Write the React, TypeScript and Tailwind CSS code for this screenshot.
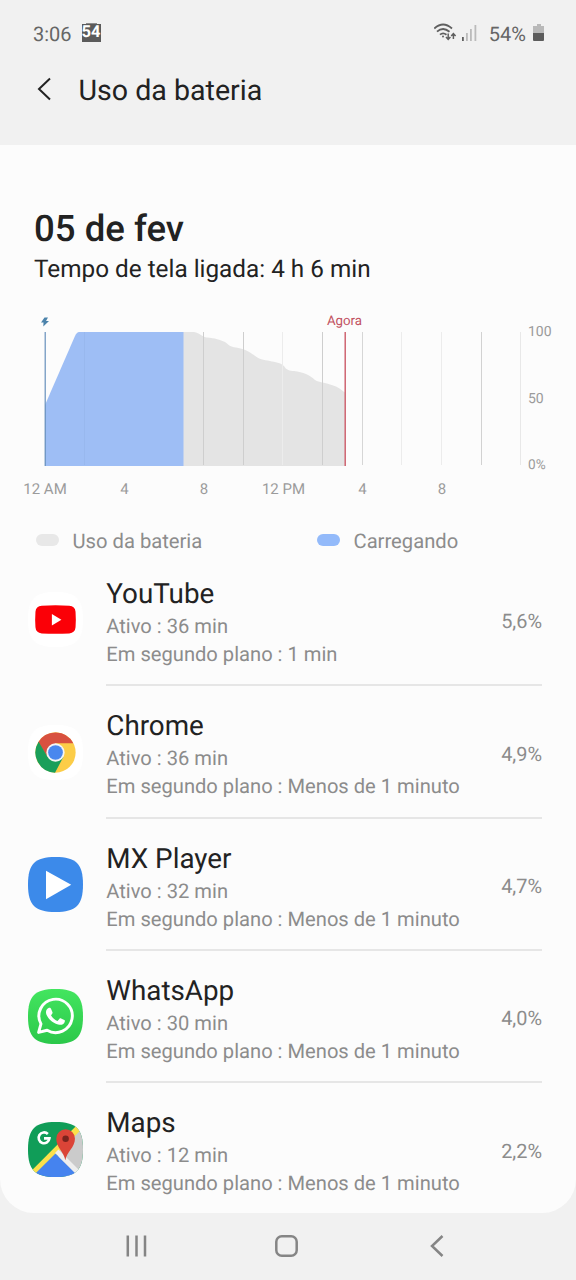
import React from "react";

const GRID = [
  [84.5, "#eeeeee"],
  [203.5, "#cecece"],
  [243.5, "#cecece"],
  [282.5, "#ececec"],
  [322.5, "#cecece"],
  [362.5, "#d6d6d6"],
  [401.5, "#ececec"],
  [441.5, "#ececec"],
  [481.5, "#d2d2d2"],
  [520.5, "#e8e8e8"],
] as const;

const HOURS = [
  [45, "12 AM"],
  [124.5, "4"],
  [204, "8"],
  [283.5, "12 PM"],
  [362.5, "4"],
  [442, "8"],
] as const;

function Chart() {
  return (
    <svg viewBox="0 305 576 200" className="block h-[200px] w-full shrink-0 font-['Roboto',sans-serif]">
      <path d="M183 332H194C200 333 202 337 207 337.500C215 338 220 340 225 342C229 345 230 347 236 347.500C246 349 249 352 254 355C258 359 264 360 270 361C275 362 281 363 284 366C286 370 290 371 294 371C303 372 310 375 315 380C320 383 324 382 330 384.500C337 386 340 389 345 392.500V466H183Z" fill="#e4e4e4" />
      <path d="M45 405L75 336Q77 332 79 332H183.500V466H45Z" fill="#9ebef5" />
      {GRID.map(([x, color]) => (
        <line key={x} x1={x} x2={x} y1="332" y2="465" stroke={x < 100 ? "#98b8ee" : color} strokeWidth="1" />
      ))}
      <rect x="44.600" y="332" width="1.200" height="134" fill="#668fbb" />
      <rect x="344.500" y="332" width="1.400" height="134" fill="#cb5a68" />
      <path d="M44.500 317.500L41 322.500H43.500L43.300 326.500L49 321H46L48 317.500Z" fill="#4c83ab" />
      <text x="344.500" y="325" textAnchor="middle" fontSize="13.300" fill="#c25362">Agora</text>
      <g fill="#9b9b9b" fontSize="14">
        <text x="528" y="336">100</text>
        <text x="528" y="403">50</text>
        <text x="528" y="469.300" fontSize="13.600">0%</text>
      </g>
      <g fill="#9b9b9b" fontSize="15" textAnchor="middle">
        {HOURS.map(([x, label]) => (
          <text key={x} x={x} y="494">{label}</text>
        ))}
      </g>
    </svg>
  );
}

const SQUIRCLE = "M28 0C49 0 56 7 56 28S49 56 28 56S0 49 0 28S7 0 28 0Z";

function YouTubeIcon() {
  return (
    <svg viewBox="0 0 56 56" className="size-[55px]">
      <path d={SQUIRCLE} fill="#fff" />
      <path d="M14 14Q28 13.200 42 14Q48 14.400 48.400 20Q49 28 48.400 36Q48 41.800 42 42.200Q28 43 14 42.200Q8 41.800 7.600 36Q7 28 7.600 20Q8 14.400 14 14Z" fill="#fb0007" />
      <path d="M24.300 22.400V34L34 28.200Z" fill="#fff" />
    </svg>
  );
}

function ChromeIcon() {
  return (
    <svg viewBox="0 0 56 56" className="size-[55px]">
      <path d={SQUIRCLE} fill="#fff" />
      <circle cx="28" cy="28" r="20.500" fill="#fccd48" />
      <path d="M10.250 17.750A20.500 20.500 0 0 1 46.200 18.700H28L20 32.600Z" fill="#d85140" />
      <path d="M10.800 17A20.500 20.500 0 0 0 27.500 48.500L36 32.600L28 28L20 32.600Z" fill="#1a9f5a" />
      <circle cx="28" cy="28" r="9.300" fill="#f5f5f5" />
      <circle cx="28" cy="28" r="7.500" fill="#4a87ee" />
    </svg>
  );
}

function PlayerIcon() {
  return (
    <svg viewBox="0 0 56 56" className="size-[55px]">
      <path d={SQUIRCLE} fill="#3c8aea" />
      <path d="M18.300 14V43L44 28.300Z" fill="#fff" />
    </svg>
  );
}

function WhatsAppIcon() {
  return (
    <svg viewBox="0 0 56 56" className="size-[55px]">
      <defs>
        <linearGradient id="wa" x1="0" y1="0" x2="0" y2="1">
          <stop offset="0" stopColor="#43e55f" />
          <stop offset="1" stopColor="#2bc84a" />
        </linearGradient>
      </defs>
      <path d={SQUIRCLE} fill="url(#wa)" />
      <path d="M11.300 44.500L13.700 35.800A17 17 0 1 1 20 42.300Z" transform="translate(-0.500 -0.300)" fill="none" stroke="#fff" strokeWidth="3" strokeLinejoin="round" />
      <path transform="translate(0.500 1) scale(0.940)" d="M22.200 19.200C23.400 19 24 19.300 24.500 20.500L26 24C26.300 25 25.800 25.700 24.400 27.300C26.200 30.500 28.500 32.400 31.500 33.600L33.600 31.100C34.100 30.500 34.600 30.500 35.300 30.800L38.800 32.500C39.600 32.900 39.500 33.500 39.200 34.600C38.500 37 35.500 38.100 33.300 37.600C26.500 36.200 21.500 31.600 19.400 26.500C18.200 23.500 19.500 20 22.200 19.200Z" fill="#fff" />
    </svg>
  );
}

function MapsIcon() {
  return (
    <svg viewBox="0 0 56 56" className="size-[55px]">
      <defs>
        <clipPath id="maps-shape"><path d={SQUIRCLE} /></clipPath>
      </defs>
      <g clipPath="url(#maps-shape)">
        <rect width="56" height="56" fill="#109d58" />
        <path d="M56 4V56H40L28 28Z" fill="#cbcbcb" />
        <path d="M4 49L49 4L53.500 8.500L8.500 53.500Z" fill="#fbe04b" />
        <path d="M28 32L52 56H4Z" fill="#4583ef" />
        <path d="M27.500 31.500L31 28L55 52L51.500 55.500Z" fill="#eeeeee" />
      </g>
      <path d="M38 39C36.500 30 28.800 26 28.800 17A9.500 9.500 0 0 1 47.800 17C47.800 26 39.500 30 38 39Z" fill="#db4437" />
      <circle cx="38.300" cy="17" r="3.300" fill="#7b231d" />
      <path d="M20.200 12.200A5.500 5.500 0 1 0 21.800 16.700H16.300" fill="none" stroke="#fff" strokeWidth="2.700" />
    </svg>
  );
}

const APPS = [
  { name: "YouTube", active: "36 min", background: "1 min", usage: "5,6%", Icon: YouTubeIcon },
  { name: "Chrome", active: "36 min", background: "Menos de 1 minuto", usage: "4,9%", Icon: ChromeIcon },
  { name: "MX Player", active: "32 min", background: "Menos de 1 minuto", usage: "4,7%", Icon: PlayerIcon },
  { name: "WhatsApp", active: "30 min", background: "Menos de 1 minuto", usage: "4,0%", Icon: WhatsAppIcon },
  { name: "Maps", active: "12 min", background: "Menos de 1 minuto", usage: "2,2%", Icon: MapsIcon },
];

function StatusBar() {
  return (
    <div className="flex h-[66px] items-center pl-[33px] pr-[31px] text-[20px] text-[#666666]">
      <span className="pt-px">3:06</span>
      <span className="relative ml-[10px] flex h-[18px] w-[19px] items-center justify-center bg-[#5b5b5b] text-[16.500px] font-bold leading-none text-white">
        54
        <span className="absolute -top-px left-[4px] h-px w-[11px] bg-[#8c8c8c]" />
      </span>
      <svg viewBox="434 22 46 22" className="ml-auto h-[22px] w-[46px]">
        <g fill="none" stroke="#5f5f5f" strokeWidth="1.800">
          <path d="M434.300 28.500Q443 20.500 452 28.500" />
          <path d="M437 31.700Q443 26.200 449.500 31.700" />
          <path d="M440 34.700Q443 32 446.500 34.700" />
          <path strokeWidth="1.500" d="M448.200 33.500V39M446 37L448.200 39.300L450.400 37M453.400 39V34M451.200 36L453.400 33.700L455.600 36" />
        </g>
        <circle cx="443" cy="36.500" r="1" fill="#5f5f5f" />
        <rect x="462" y="37" width="1.800" height="4" fill="#5f5f5f" />
        <path d="M466 33H467.800V41H466ZM470 29H471.800V41H470ZM474.500 25H476.300V41H474.500Z" fill="#bbb" />
      </svg>
      <span className="ml-[8.500px] pt-px">54%</span>
      <svg viewBox="0 0 12 18" className="ml-[7px] h-[18px] w-[12px]">
        <path d="M4 0H8V2H11V9H0V2H4Z" fill="#b9b9b9" />
        <path d="M0 9H11V16Q11 17 10 17H1Q0 17 0 16Z" fill="#5c5c5c" />
      </svg>
    </div>
  );
}

export default function App() {
  return (
    <div className="flex h-[1280px] w-[576px] flex-col overflow-hidden bg-[#f1f1f1] font-['Roboto',sans-serif] [text-rendering:geometricPrecision]">
      <header className="h-[145px] shrink-0">
        <StatusBar />
        <div className="flex h-[48px] items-center pl-[36px]">
          <svg viewBox="0 0 16 24" className="mb-[2px] h-[24px] w-[16px]">
            <path d="M14 1.500L3 12L14 22.500" fill="none" stroke="#222" strokeWidth="2" />
          </svg>
          <h1 className="ml-[26.500px] text-[28.600px] leading-[44px] text-[#222222]">Uso da bateria</h1>
        </div>
      </header>
      <main className="flex h-[1068px] shrink-0 flex-col rounded-b-[34px] bg-[#fcfcfc]">
        <div className="h-[160px] shrink-0 px-[34px] pt-[62px] text-[#222222]">
          <h2 className="text-[36.600px] font-medium leading-[44px]">05 de fev</h2>
          <p className="text-[24.300px] leading-[36px]">Tempo de tela ligada: 4 h 6 min</p>
        </div>
        <Chart />
        <div className="flex h-[56px] shrink-0 items-center pb-px pl-[36px] pt-[17px] text-[20.200px] text-[#8c8c8c]">
          <div className="flex w-[281px] items-center gap-[13.500px]">
            <span className="mb-[2px] h-[12px] w-[23px] rounded-full bg-[#e8e8e8]" />
            Uso da bateria
          </div>
          <div className="flex items-center gap-[13.500px]">
            <span className="mb-[2px] h-[12px] w-[23px] rounded-full bg-[#93bafa]" />
            Carregando
          </div>
        </div>
        <ul className="h-[652px] shrink-0">
          {APPS.map(({ name, active, background, usage, Icon }, i) => (
            <li key={name} className={i === 0 ? "flex h-[125.300px] pl-[28px] pr-[34px]" : "flex h-[132.300px] pl-[28px] pr-[34px] pt-[7px]"}>
              <div className={i === 0 ? "mr-[23.300px] mt-[31px]" : "mr-[23.300px] mt-[31.500px]"}><Icon /></div>
              <div className={i === APPS.length - 1 ? "flex flex-1 items-center" : "flex flex-1 items-center border-b-2 border-[#e6e6e6]"}>
                <div className="h-full flex-1 pt-[14px]">
                  <h3 className="text-[27.800px] leading-[37px] text-[#222222]">{name}</h3>
                  <p className="text-[20.150px] leading-[28px] text-[#8c8c8c]">Ativo : {active}</p>
                  <p className="text-[20.150px] leading-[28px] text-[#8c8c8c]">Em segundo plano : {background}</p>
                </div>
                <span className="pb-[1px] text-[19.900px] text-[#8c8c8c]">{usage}</span>
              </div>
            </li>
          ))}
        </ul>
      </main>
      <nav className="flex flex-1 items-center">
        <svg viewBox="0 1213 576 67" className="h-[67px] w-full" fill="none" stroke="#858585" strokeWidth="2.500">
          <path d="M127.800 1235.500V1256.500M136.500 1235.500V1256.500M145 1235.500V1256.500" />
          <rect x="276.300" y="1236.300" width="20.400" height="19.400" rx="5.500" />
          <path d="M442.500 1236L432 1246L442.500 1256" />
        </svg>
      </nav>
    </div>
  );
}
